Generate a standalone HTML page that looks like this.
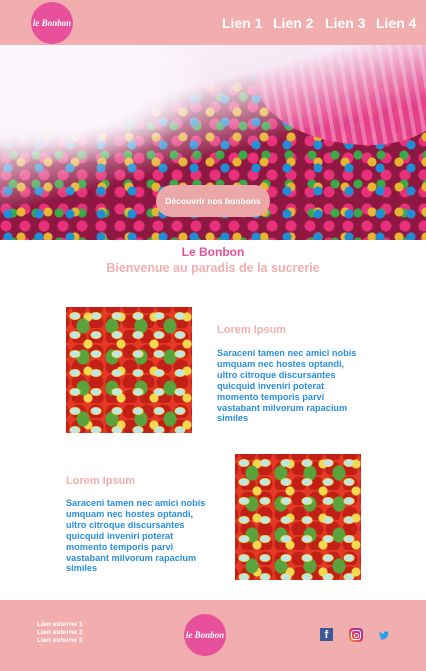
<!DOCTYPE html>
<html><head><meta charset="utf-8"><style>
*{margin:0;padding:0;box-sizing:border-box}
body{width:426px;height:671px;overflow:hidden;background:#fff;font-family:"Liberation Sans",sans-serif;position:relative}
.abs{position:absolute}
header{position:absolute;left:0;top:0;width:426px;height:45px;background:#f2aeae;z-index:2}
.logo{position:absolute;border-radius:50%;background:#e9509c;color:#fff;font-family:"Liberation Serif",serif;font-style:italic;font-weight:bold;display:flex;align-items:center;justify-content:center}
nav a{position:absolute;top:15px;color:#fff;font-weight:bold;font-size:14px;text-decoration:none}
.hero{position:absolute;left:0;top:45px;width:426px;height:195px;overflow:hidden;
background:
radial-gradient(circle at 8px 8px,#1e8fd6 0 4px,transparent 5px) 0 0/31px 23px,
radial-gradient(circle at 8px 8px,#e8b531 0 4px,transparent 5px) 13px 9px/27px 25px,
radial-gradient(circle at 8px 8px,#3aa947 0 4px,transparent 5px) 5px 15px/23px 29px,
radial-gradient(circle at 8px 8px,#e8317a 0 5px,transparent 6px) 17px 3px/19px 17px,
#8e1842}
.fade{position:absolute;inset:0;background:linear-gradient(165deg,#fbf5fb 0%,#f6eaf4 30%,rgba(246,234,244,.5) 42%,rgba(246,234,244,0) 55%)}
.fade2{position:absolute;left:0;top:0;width:426px;height:195px;background:radial-gradient(ellipse 150px 90px at 60px 30px,#fcf7fc 60%,transparent 100%)}
.cup{position:absolute;right:-20px;top:-10px;width:190px;height:110px;border-radius:0 0 40% 60%;background:repeating-linear-gradient(80deg,#e8418d 0 6px,#f07ab0 6px 10px);opacity:.95}
.btn{position:absolute;left:156px;top:185px;width:114px;height:32px;border-radius:16px;background:#eba7a7;color:#fff;font-size:8.5px;font-weight:bold;display:flex;align-items:center;justify-content:center;z-index:3}
.candy{position:absolute;width:126px;height:126px;background:
radial-gradient(ellipse 7px 5px at 9px 9px,#bfe6e6 0 4px,#f5e04a 5px,transparent 6px) 0 0/21px 19px,
radial-gradient(ellipse 6px 7px at 8px 8px,#5aa23a 0 6px,transparent 7px) 9px 11px/29px 31px,
radial-gradient(circle at 7px 7px,#f3d94b 0 4px,transparent 5px) 15px 3px/33px 27px,
radial-gradient(circle at 9px 9px,#c21f17 0 7px,transparent 8px) 4px 6px/17px 15px,
#e43a25}
h2{font-size:11px;color:#f2aeae;font-weight:bold}
p.b{font-size:9.2px;line-height:10.9px;color:#2a8fe0;font-weight:bold;white-space:nowrap}
.fl{position:absolute;left:37px;top:621px;color:#fff;font-size:6.8px;line-height:8px;font-weight:bold}
</style></head><body>
<header>
<div class="logo" style="left:31px;top:2px;width:42px;height:42px;font-size:9px">le Bonbon</div>
<nav><a style="left:222px">Lien 1</a><a style="left:273px">Lien 2</a><a style="left:325px">Lien 3</a><a style="left:376px">Lien 4</a></nav>
</header>
<div class="hero"><div class="cup"></div><div class="fade"></div><div class="fade2"></div></div>
<div class="btn">Découvrir nos bonbons</div>
<div class="abs" style="top:245px;width:426px;text-align:center;color:#e9509c;font-weight:bold;font-size:12px">Le Bonbon</div>
<div class="abs" style="top:261px;width:426px;text-align:center;color:#f2aeae;font-weight:bold;font-size:12.5px">Bienvenue au paradis de la sucrerie</div>
<div class="candy" style="left:66px;top:307px"></div>
<h2 class="abs" style="left:217px;top:324px">Lorem Ipsum</h2>
<p class="b abs" style="left:217px;top:348px">Saraceni tamen nec amici nobis<br>umquam nec hostes optandi,<br>ultro citroque discursantes<br>quicquid inveniri poterat<br>momento temporis parvi<br>vastabant milvorum rapacium<br>similes</p>
<h2 class="abs" style="left:66px;top:475px">Lorem Ipsum</h2>
<p class="b abs" style="left:66px;top:498px">Saraceni tamen nec amici nobis<br>umquam nec hostes optandi,<br>ultro citroque discursantes<br>quicquid inveniri poterat<br>momento temporis parvi<br>vastabant milvorum rapacium<br>similes</p>
<div class="candy" style="left:235px;top:454px"></div>
<div class="abs" style="left:0;top:600px;width:426px;height:71px;background:#f2aeae"></div>
<div class="fl">Lien externe 1<br>Lien externe 2<br>Lien externe 3</div>
<div class="logo" style="left:184px;top:614px;width:42px;height:42px;font-size:9px">le Bonbon</div>
<div class="abs" style="left:320px;top:628px;width:13px;height:13px;background:#3b5998;color:#fff;font-weight:bold;font-size:11px;text-align:center;line-height:15px;overflow:hidden">f</div>
<div class="abs" style="left:349px;top:628px;width:14px;height:14px;border-radius:4px;background:linear-gradient(45deg,#f5a623,#e1306c,#833ab4)"><div style="position:absolute;left:2px;top:2px;width:10px;height:10px;border:1.3px solid #fff;border-radius:3px"></div><div style="position:absolute;left:4.5px;top:4.5px;width:5px;height:5px;border:1.2px solid #fff;border-radius:50%"></div></div>
<svg class="abs" style="left:379px;top:631px" width="10" height="9" viewBox="0 0 24 20"><path fill="#1da1f2" d="M24 2.4a10 10 0 0 1-2.8.8A5 5 0 0 0 23.3.4a10 10 0 0 1-3.1 1.2A4.9 4.9 0 0 0 11.8 6 14 14 0 0 1 1.7.9a4.9 4.9 0 0 0 1.5 6.6A4.9 4.9 0 0 1 1 6.9a4.9 4.9 0 0 0 3.9 4.8 5 5 0 0 1-2.2.1 4.9 4.9 0 0 0 4.6 3.4A9.9 9.9 0 0 1 0 17.3 14 14 0 0 0 7.5 19.5c9.1 0 14-7.5 14-14v-.6A10 10 0 0 0 24 2.4z"/></svg>
</body></html>
